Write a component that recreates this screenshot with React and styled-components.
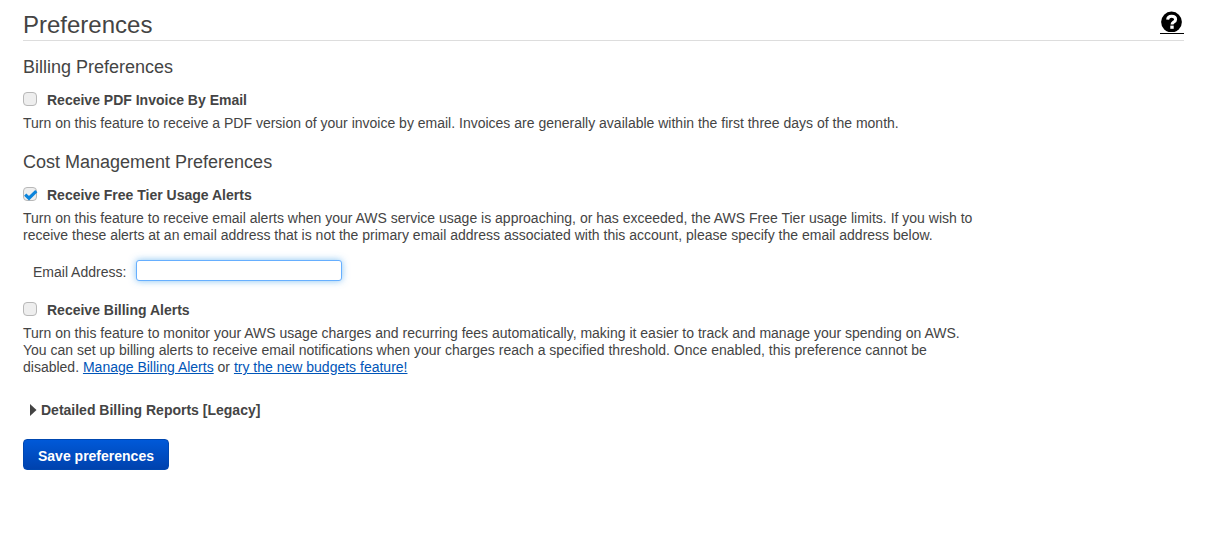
import React, { useState } from "react";
import styled, { createGlobalStyle } from "styled-components";

const GlobalStyle = createGlobalStyle`
  *, *::before, *::after { box-sizing: border-box; }
  body {
    margin: 0;
    background: #fff;
    color: #444;
    font-family: "Liberation Sans", Arial, Helvetica, sans-serif;
    font-size: 14px;
    line-height: 17px;
  }
`;

const Page = styled.main`
  padding: 10px 24px 24px 23px;
`;

const Header = styled.header`
  display: flex;
  justify-content: space-between;
  align-items: flex-start;
  margin-bottom: 14px;
  border-bottom: 1px solid #ddd;
`;

const Title = styled.h1`
  margin: 0;
  font-size: 24px;
  font-weight: 400;
  line-height: 30px;
`;

const HelpLink = styled.a`
  display: flex;
  justify-content: center;
  width: 24px;
  height: 24px;
  border-bottom: 1px solid #000;
  color: #000;
`;

const Sections = styled.div`
  display: flex;
  flex-direction: column;
  gap: 18px;
  max-width: 956px;
`;

const SectionTitle = styled.h2`
  margin: 0 0 12px;
  font-size: 18px;
  font-weight: 400;
  line-height: 24px;
`;

const Option = styled.label`
  display: flex;
  align-items: flex-start;
  gap: 10px;
  font-weight: 700;
  line-height: 18px;
`;

const Box = styled.span`
  display: grid;
  width: 14px;
  height: 14px;
  margin-top: 1px;

  > * { grid-area: 1 / 1; }
`;

const Checkbox = styled.input.attrs({ type: "checkbox" })`
  appearance: none;
  width: 14px;
  height: 14px;
  margin: 0;
  border: 1px solid #b8b8b8;
  border-radius: 4px;
  background: #eee;
`;

const Tick = styled.svg`
  display: none;
  overflow: visible;
  pointer-events: none;

  ${Checkbox}:checked + & { display: block; }
`;

const Description = styled.p`
  margin: 6px 0 0;
`;

const Link = styled.a`
  color: #0055b8;
`;

const EmailRow = styled.div`
  display: flex;
  align-items: flex-end;
  gap: 10px;
  margin: 16px 0 20px;
  padding-left: 10px;
`;

const EmailInput = styled.input`
  width: 206px;
  height: 21px;
  padding: 0 4px;
  border: 1px solid #66afff;
  border-radius: 3px;
  outline: none;
  background: #fff;
  box-shadow: 0 0 7px rgba(82, 168, 236, 0.7);
  font: inherit;
  color: inherit;
`;

const Reports = styled.details`
  margin: 25px 0 20px;
  padding-left: 7px;

  &[open] svg { transform: rotate(90deg); }
`;

const ReportsTitle = styled.summary`
  display: flex;
  align-items: center;
  gap: 4px;
  font-weight: 700;
  line-height: 18px;
  cursor: pointer;
`;

const SaveButton = styled.button`
  display: block;
  height: 31px;
  padding: 4px 14px 0;
  border: 1px solid #0047b0;
  border-radius: 4px;
  background: linear-gradient(#0059d8, #0042ae);
  color: #fff;
  font: inherit;
  font-weight: 700;
  cursor: pointer;
`;

function PreferenceOption({ label, initial = false }) {
  const [checked, setChecked] = useState(initial);
  return (
    <Option>
      <Box>
        <Checkbox checked={checked} onChange={(e) => setChecked(e.target.checked)} />
        <Tick width="14" height="14" viewBox="0 0 14 14" aria-hidden="true">
          <path d="M2.200 7.600 6 11.200 13.300 4.200" fill="none" stroke="#0b84dc" strokeWidth="3.200" />
        </Tick>
      </Box>
      {label}
    </Option>
  );
}

export default function App() {
  return (
    <>
      <GlobalStyle />
      <Page>
        <Header>
          <Title>Preferences</Title>
          <HelpLink href="#help" aria-label="Help">
            <svg width="22" height="22" viewBox="0 0 22 22" aria-hidden="true">
              <circle cx="10.500" cy="12" r="10.400" fill="currentColor" />
              <path
                d="M6.600 9.600C6.900 7.300 8.400 6.300 10.600 6.300c2.500 0 4 1.200 4 3.100 0 2.700-3.600 2.500-3.600 5"
                fill="none"
                stroke="#fff"
                strokeWidth="3"
              />
              <rect x="9.300" y="15.600" width="3.400" height="3.200" fill="#fff" />
            </svg>
          </HelpLink>
        </Header>

        <Sections>
          <section>
            <SectionTitle>Billing Preferences</SectionTitle>
            <PreferenceOption label="Receive PDF Invoice By Email" />
            <Description>
              Turn on this feature to receive a PDF version of your invoice by email. Invoices are
              generally available within the first three days of the month.
            </Description>
          </section>

          <section>
            <SectionTitle>Cost Management Preferences</SectionTitle>
            <PreferenceOption label="Receive Free Tier Usage Alerts" initial />
            <Description>
              Turn on this feature to receive email alerts when your AWS service usage is
              approaching, or has exceeded, the AWS Free Tier usage limits. If you wish to receive
              these alerts at an email address that is not the primary email address associated with
              this account, please specify the email address below.
            </Description>
            <EmailRow>
              <label htmlFor="email">Email Address:</label>
              <EmailInput id="email" type="email" />
            </EmailRow>
            <PreferenceOption label="Receive Billing Alerts" />
            <Description>
              Turn on this feature to monitor your AWS usage charges and recurring fees
              automatically, making it easier to track and manage your spending on AWS. You can set
              up billing alerts to receive email notifications when your charges reach a specified
              threshold. Once enabled, this preference cannot be disabled.{" "}
              <Link href="#billing-alerts">Manage Billing Alerts</Link> or{" "}
              <Link href="#budgets">try the new budgets feature!</Link>
            </Description>
          </section>
        </Sections>

        <Reports>
          <ReportsTitle>
            <svg width="7" height="12" viewBox="0 0 7 12" aria-hidden="true">
              <path d="M0 0 6.500 6 0 12Z" fill="#444" />
            </svg>
            Detailed Billing Reports [Legacy]
          </ReportsTitle>
        </Reports>
        <SaveButton type="button">Save preferences</SaveButton>
      </Page>
    </>
  );
}
